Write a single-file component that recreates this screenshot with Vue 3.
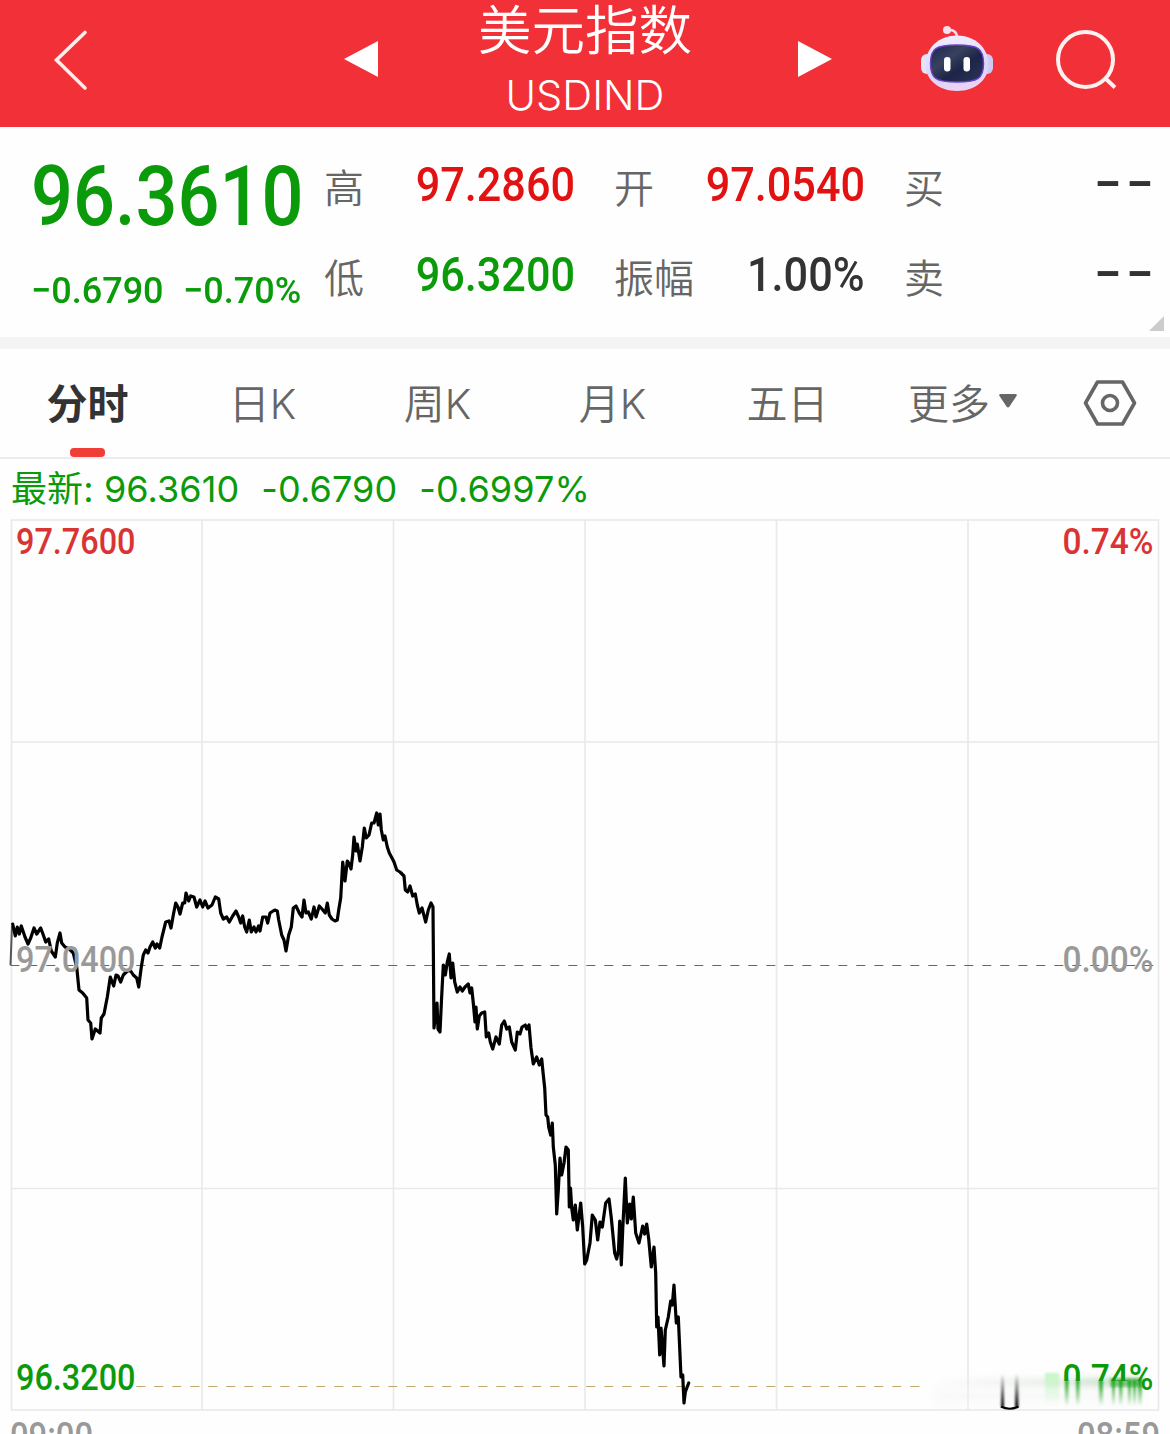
<template>
  <div class="page">
    <header class="topbar">
      <svg class="back" viewBox="0 0 40 66">
        <path d="M34 5.500 5.500 33 34 61" />
      </svg>
      <svg class="arrow prev" viewBox="0 0 34 36"><path d="M34 0V36L0 18Z" /></svg>
      <div class="title">
        <h1>美元指数</h1>
        <span>USDIND</span>
      </div>
      <svg class="arrow next" viewBox="0 0 34 36"><path d="M0 0V36L34 18Z" /></svg>
      <svg class="robot" viewBox="0 0 72 66">
        <defs>
          <linearGradient id="shell" x1="0" y1="0" x2="0.2" y2="1">
            <stop offset="0" stop-color="#f4efff" />
            <stop offset="0.7" stop-color="#dcd4f8" />
            <stop offset="1" stop-color="#e8d4f4" />
          </linearGradient>
          <linearGradient id="visor" x1="0" y1="0" x2="1" y2="1">
            <stop offset="0" stop-color="#1b2550" />
            <stop offset="0.35" stop-color="#39415f" />
            <stop offset="0.6" stop-color="#1c2547" />
            <stop offset="1" stop-color="#2d3459" />
          </linearGradient>
        </defs>
        <path d="M26 4Q36 3 36 12" fill="none" stroke="#f0d9ee" stroke-width="2.600" />
        <circle cx="26" cy="4" r="4" fill="#f3dff0" />
        <rect x="0" y="28" width="12" height="20" rx="6" fill="#e3e4fa" />
        <rect x="60" y="28" width="12" height="20" rx="6" fill="#cfc9f5" />
        <path
          d="M36 9.500C54 9.500 67.500 22 67.500 38.500 67.500 54 54 65 36 65S4.500 54 4.500 38.500C4.500 22 18 9.500 36 9.500Z"
          fill="url(#shell)"
        />
        <path
          d="M36 19C57 19 62.500 22.500 62.500 37.500S57 56 36 56 9.500 52.500 9.500 37.500 15 19 36 19Z"
          fill="url(#visor)"
          stroke="#6840c8"
          stroke-width="1.400"
        />
        <rect x="23" y="31" width="6.500" height="14.500" rx="3.200" fill="#fff" />
        <rect x="42.500" y="31" width="6.500" height="14.500" rx="3.200" fill="#fff" />
      </svg>
      <svg class="search" viewBox="0 0 62 62">
        <circle cx="29.500" cy="30.500" r="27.500" />
        <path d="M48.500 48.500 59 58.500" />
      </svg>
    </header>

    <section class="quote">
      <div class="quote-main">
        <div class="num price down">{{ price }}</div>
        <div class="change down">
          <span class="num">−0.6790</span>
          <span class="num">−0.70%</span>
        </div>
      </div>
      <div class="quote-grid">
        <div v-for="item in stats" :key="item.label" class="cell">
          <span class="label">{{ item.label }}</span>
          <span class="num value" :class="item.tone">{{ item.value }}</span>
        </div>
      </div>
      <i class="corner"></i>
    </section>

    <nav class="tabs">
      <div
        v-for="(tab, index) in tabs"
        :key="tab"
        class="tab"
        :class="{ active: index === activeTab }"
      >
        {{ tab }}
        <svg v-if="tab === '更多'" class="caret" viewBox="0 0 18 14">
          <path d="M1.500 0H16.500Q18.500 0 17.500 2L10.500 12.500Q9 14.500 7.500 12.500L.500 2Q-.500 0 1.500 0Z" />
        </svg>
      </div>
      <div class="settings">
        <svg viewBox="0 0 54 48">
          <path d="M14.500 3H39.500L51.500 24 39.500 45H14.500L2.500 24Z" />
          <circle cx="27" cy="24" r="7.500" />
        </svg>
      </div>
    </nav>

    <div class="latest">
      <span>最新: {{ price }}</span>
      <span>-0.6790</span>
      <span>-0.6997%</span>
    </div>

    <svg class="chart" viewBox="0 519 1170 915">
      <defs>
        <linearGradient id="fadeDown" x1="0" y1="0" x2="0" y2="1">
          <stop offset="0" stop-color="#0a9a0a" stop-opacity="0.9" />
          <stop offset="1" stop-color="#0a9a0a" stop-opacity="0" />
        </linearGradient>
        <linearGradient id="fadeUp" x1="0" y1="0" x2="0" y2="1">
          <stop offset="0" stop-color="#000" stop-opacity="0" />
          <stop offset="1" stop-color="#000" />
        </linearGradient>
        <linearGradient id="haze" x1="0" y1="0" x2="1" y2="0">
          <stop offset="0" stop-color="#dfe6df" stop-opacity="0" />
          <stop offset="0.6" stop-color="#dfe6df" stop-opacity="0.7" />
          <stop offset="1" stop-color="#8fc98f" stop-opacity="0.7" />
        </linearGradient>
        <linearGradient id="greenHaze" x1="0" y1="0" x2="0" y2="1">
          <stop offset="0" stop-color="#b9f5b9" stop-opacity="0.8" />
          <stop offset="1" stop-color="#b9f5b9" stop-opacity="0" />
        </linearGradient>
        <clipPath id="lowLabel">
          <path d="M1055 1355H1160V1400H1142V1381H1055Z" />
        </clipPath>
        <filter id="soft" x="-1" width="3"><feGaussianBlur stdDeviation="0.8" /></filter>
        <filter id="wide" y="-1" height="3"><feGaussianBlur stdDeviation="3" /></filter>
      </defs>

      <g class="grid">
        <path v-for="x in gridX" :key="x" :d="`M${x} 520V1410`" />
        <path v-for="y in gridY" :key="y" :d="`M11 ${y}H1159`" />
        <rect x="11.500" y="520" width="1147" height="890" />
      </g>
      <path class="dash" d="M10.300 965.500H1154" />
      <path class="dash low" d="M136.300 1386.500H920" />

      <path class="open" d="M10.500 965 12 926" />
      <polyline class="line" :points="points" />

      <g class="axis">
        <text
          v-for="t in axisLabels"
          :key="t.text + t.y"
          :x="t.x"
          :y="t.y"
          :textLength="t.width"
          lengthAdjust="spacingAndGlyphs"
          :class="t.tone"
        >{{ t.text }}</text>
      </g>

      <!-- smudged strip under the lower percent label -->
      <g class="smear">
        <rect x="928" y="1378" width="216" height="9" fill="url(#haze)" filter="url(#wide)" />
        <rect x="934" y="1386" width="208" height="20" fill="#f4f4f4" opacity="0.4" filter="url(#wide)" />
        <rect x="1045" y="1373" width="14" height="32" fill="url(#greenHaze)" filter="url(#soft)" />
        <rect x="1001" y="1374" width="3" height="33" fill="url(#fadeUp)" filter="url(#soft)" />
        <rect x="1015" y="1374" width="3.500" height="33" fill="url(#fadeUp)" filter="url(#soft)" />
        <path d="M1001 1406.500Q1009.500 1411 1018.500 1406.500" fill="none" stroke="#000" stroke-width="2.200" />
        <rect x="1110" y="1378" width="33" height="9" fill="#0a9a0a" opacity="0.4" filter="url(#soft)" />
        <rect
          v-for="s in streaks"
          :key="s[0]"
          :x="s[0]"
          y="1380"
          :width="s[1]"
          height="26"
          fill="url(#fadeDown)"
          filter="url(#soft)"
        />
      </g>
      <g class="axis" clip-path="url(#lowLabel)">
        <text x="1062.500" y="1390" textLength="91" lengthAdjust="spacingAndGlyphs" class="down">0.74%</text>
      </g>
    </svg>
  </div>
</template>

<script setup>
import { ref } from 'vue'

const price = ref('96.3610')
const activeTab = ref(0)
const tabs = ['分时', '日K', '周K', '月K', '五日', '更多']

const stats = ref([
  { label: '高', value: '97.2860', tone: 'up' },
  { label: '开', value: '97.0540', tone: 'up' },
  { label: '买', value: '--', tone: 'none' },
  { label: '低', value: '96.3200', tone: 'down' },
  { label: '振幅', value: '1.00%', tone: '' },
  { label: '卖', value: '--', tone: 'none' },
])

const axisLabels = [
  { text: '97.7600', x: 16, y: 554, width: 119.5, tone: 'up' },
  { text: '97.0400', x: 16, y: 972, width: 119.5, tone: 'mid' },
  { text: '96.3200', x: 16, y: 1390, width: 119.5, tone: 'down' },
  { text: '0.74%', x: 1062.5, y: 554, width: 91, tone: 'up' },
  { text: '0.00%', x: 1062.5, y: 972, width: 91, tone: 'mid' },
  { text: '09:00', x: 10, y: 1448, width: 83, tone: 'mid' },
  { text: '08:59', x: 1077, y: 1448, width: 83, tone: 'mid' },
]

const gridX = [202, 393.5, 585, 776.5, 968]
const gridY = [742, 1188.5]

// x, width
const streaks = [
  [1065, 3.5],
  [1076, 3.5],
  [1099, 4],
  [1112, 3],
  [1119, 3.5],
  [1128, 3],
  [1133, 3],
  [1138, 4],
]

const points = `
12.7,924 15.3,936 17.3,927 19.3,934 21.3,926 23.3,932 25,937 28,944 30.7,938 34,928
36.7,934 40.7,928 43.3,935 45.7,942 48.7,939 51.3,951 55.3,957 57.3,943 60,933 61.7,943
65,947 69.3,949 73.3,953 76.7,967 79,990 82.7,993 86.7,998 88,1020 90.7,1023 92,1039
95.3,1029 100,1033 101.3,1018 104,1014 107.3,997 110.3,977 113.7,986 116,975 118,976 120.7,982
123.3,975 127.3,971 130.7,971 133.3,975 136.7,978 138.7,987 141.3,967 143.3,955 145.7,950 148,953
150,947 152.7,942 155.3,948 157,944 159.7,948 162,937 165.7,922 169,921 171,928 173.3,915
175.7,903 178,907 180,914 182.7,903 184.7,903 186,893 188.7,901 190.7,896 194,897 196.7,907
200,900 202.7,907 205,901 208,908 212,905 215.3,897 218.7,899 220.7,913 223.3,919 226.7,917
229.3,922 232.7,916 236,911 238.7,917 240.7,923 242.7,916 244.7,927 246.7,932 249.3,920 251.3,932
254,927 256,932 258.500,926 260,931 262.7,917 266,917 267.7,923 270,913 274.7,910 277.3,911
278.7,920 281.7,935 284,940 286,951 288.7,935 291.3,927 293.3,908 296,906 299.3,913 302,917
304,900 306,913 308.3,912 311.3,919 314,907 316,917 319.3,906 322,909 325.3,913 327.3,903
329.3,915 332,919 335,921 337.3,920 338.7,910 340.7,898 342.7,862 345,881 347.3,861 349.3,864
351,869 352.7,855 354,837 356,851 357.3,844 360,861 362.3,847 364.3,828 366.3,838 369,835
371.7,823 374,823 376.7,813 378.3,825 380,814 381.3,830 383.3,840 385,836 387.3,847 389.3,853
392,858 394,862 396.7,870 400,872 404,876 405.3,890 407.7,892 410,886 412.7,896 415.3,894
417.3,905 419.3,913 422,908 425.7,922 428.3,910 431,903 433,907 434,1028 437,1003 438,1029
440,1032 441.500,1000 443.3,965 445.3,975 447.3,962 449.3,954 451,978 452.7,963 454.7,982 457.3,992
460,987 462.3,991 465,987 468.3,984 470,993 471.7,988 473.3,1003 475,1022 476,1007 477.3,1029
479.3,1016 481.7,1013 484.7,1012 486.3,1037 488.7,1033 490.3,1042 492.7,1049 496,1037 499.3,1044 501.7,1025
504.3,1021 506.7,1029 509.3,1027 511.7,1042 515.3,1050 517.3,1032 520,1034 522,1027 525.3,1025 526.7,1029
529,1025 531,1048 533.3,1064 536.7,1057 539.3,1065 541.7,1059 543.3,1075 544.7,1088 546,1115 547.7,1117
548.7,1127 550.7,1135 552.3,1123 553.3,1147 555.3,1165 556.7,1214 558.3,1190 560,1158 561.7,1175 564,1163
566,1147 568.3,1150 569.3,1207 570.500,1188 571.7,1208 573.3,1220 575.3,1205 577.3,1230 580.7,1203 582.7,1227
584.7,1264 586.7,1260 590,1243 592.3,1215 595.3,1220 597.7,1240 600,1222 602.3,1227 605.7,1203 609,1199
611.3,1218 614.7,1253 616.7,1259 618.500,1250 619.7,1221 621.3,1265 622.7,1230 625.3,1178 627.3,1223 629.7,1204
631.3,1219 633.3,1197 635.7,1233 639,1243 642.7,1226 644.7,1234 646.7,1224 648.7,1239 651.3,1267 654,1247
655.7,1273 656.7,1327 658,1317 659.7,1355 661,1328 664,1366 665.3,1330 668.3,1317 670.7,1301 672.3,1305
674,1285 676.3,1323 678.3,1317 681,1377 682.7,1375 684,1403 685.3,1392 688.7,1383
`
</script>

<style>
body {
  margin: 0;
  background: #fefefe;
}
</style>

<style scoped>
.page {
  width: 1170px;
  height: 1434px;
  overflow: hidden;
  background: #fefefe;
  font-family: Inter, 'Noto Sans CJK SC', sans-serif;
  color: #333;
}

.topbar {
  display: grid;
  grid-template-columns: 344px 34px 420px 34px 89px 72px 63px 62px;
  height: 127px;
  background: #f23037;
}

.back {
  width: 40px;
  height: 66px;
  margin: 27px 0 0 51px;
  fill: none;
  stroke: #ffeceb;
  stroke-width: 3.6;
  stroke-linecap: round;
}

.arrow {
  width: 34px;
  height: 36px;
  margin-top: 41px;
  fill: #fff;
}

.title {
  display: flex;
  flex-direction: column;
  align-items: center;
  padding-right: 6px;
  color: #fff;
}

.title h1 {
  margin: 0;
  font-size: 53.5px;
  font-weight: 350;
  line-height: 62px;
}

.title span {
  margin-top: 8px;
  font-size: 41.5px;
  font-weight: 350;
  line-height: 50px;
}

.robot {
  grid-column: 6;
  width: 72px;
  height: 66px;
  margin-top: 26px;
  overflow: visible;
}

.search {
  grid-column: 8;
  width: 62px;
  height: 62px;
  margin-top: 29px;
  fill: none;
  stroke: #fff1f0;
  stroke-width: 4;
}

.num {
  display: inline-block;
  font-family: Roboto, sans-serif;
  font-weight: 500;
  white-space: nowrap;
  transform: scaleX(0.9);
  transform-origin: left center;
}

.up {
  color: #e31212;
}

.down {
  color: #0a9a0a;
}

.quote {
  position: relative;
  display: flex;
  height: 210px;
  padding-left: 31px;
  border-bottom: 12px solid #f4f4f4;
}

.quote-main {
  width: 294px;
}

.price {
  margin-top: 20px;
  font-size: 84px;
  line-height: 100px;
  transform: scaleX(0.88);
}

.change {
  display: flex;
  margin-top: 19px;
  font-size: 37.5px;
  line-height: 48px;
}

.change .num {
  transform: scaleX(0.96);
}

.change .num:first-child {
  width: 152px;
}

.quote-grid {
  display: grid;
  grid-template-columns: 250px 250px 247px;
  grid-template-rows: 90px 90px;
  column-gap: 40px;
  padding-top: 14px;
}

.cell {
  display: flex;
  justify-content: space-between;
  align-items: center;
}

.label {
  margin-left: -1px;
  font-size: 40px;
  font-weight: 350;
  color: #666;
}

.value {
  padding-bottom: 3px;
  font-size: 48px;
  transform-origin: right center;
}

.value.none {
  padding-bottom: 9px;
  letter-spacing: 2.5px;
  margin-right: -6px;
  font-weight: 600;
  transform: scaleX(1.6);
}

.corner {
  position: absolute;
  right: 6px;
  bottom: 6px;
  border-left: 15px solid transparent;
  border-bottom: 15px solid #ccc;
}

.tabs {
  display: grid;
  grid-template-columns: repeat(6, 175px) 120px;
  height: 108px;
  border-bottom: 2px solid #ececec;
}

.tab {
  position: relative;
  display: flex;
  align-items: center;
  justify-content: center;
  padding-bottom: 4px;
  font-size: 41px;
  font-weight: 350;
  color: #666;
}

.tab.active {
  font-weight: 600;
  color: #333;
}

.tab.active::after {
  content: '';
  position: absolute;
  bottom: 0;
  left: 70px;
  width: 35px;
  height: 9px;
  border-radius: 4px;
  background: #f03d36;
}

.caret {
  width: 18px;
  height: 14px;
  margin-left: 9px;
  fill: #666;
}

.settings {
  display: flex;
  align-items: center;
  justify-content: center;
}

.settings svg {
  width: 54px;
  height: 48px;
  fill: none;
  stroke: #666;
  stroke-width: 3.6;
  stroke-linejoin: round;
}

.latest {
  display: flex;
  gap: 22px;
  height: 60px;
  padding-left: 11px;
  font-size: 36px;
  font-weight: 380;
  line-height: 60px;
  letter-spacing: 0.1px;
  color: #0a9a0a;
  white-space: nowrap;
}

.chart {
  display: block;
  width: 1170px;
  height: 915px;
}

.grid {
  fill: none;
  stroke: #e9e9e9;
  stroke-width: 1.6;
}

.dash {
  fill: none;
  stroke: #666;
  stroke-width: 1.2;
  stroke-dasharray: 9 9;
}

.dash.low {
  stroke: #c0a867;
}

.open {
  fill: none;
  stroke: #555;
  stroke-width: 2;
}

.line {
  fill: none;
  stroke: #000;
  stroke-width: 3.2;
  stroke-linejoin: round;
  stroke-linecap: round;
}

.axis text {
  font-family: Roboto, sans-serif;
  font-size: 36px;
  font-weight: 500;
}

.axis .up {
  fill: #d93434;
}

.axis .mid {
  fill: #999;
}

.axis .down {
  fill: #0a9a0a;
}
</style>
